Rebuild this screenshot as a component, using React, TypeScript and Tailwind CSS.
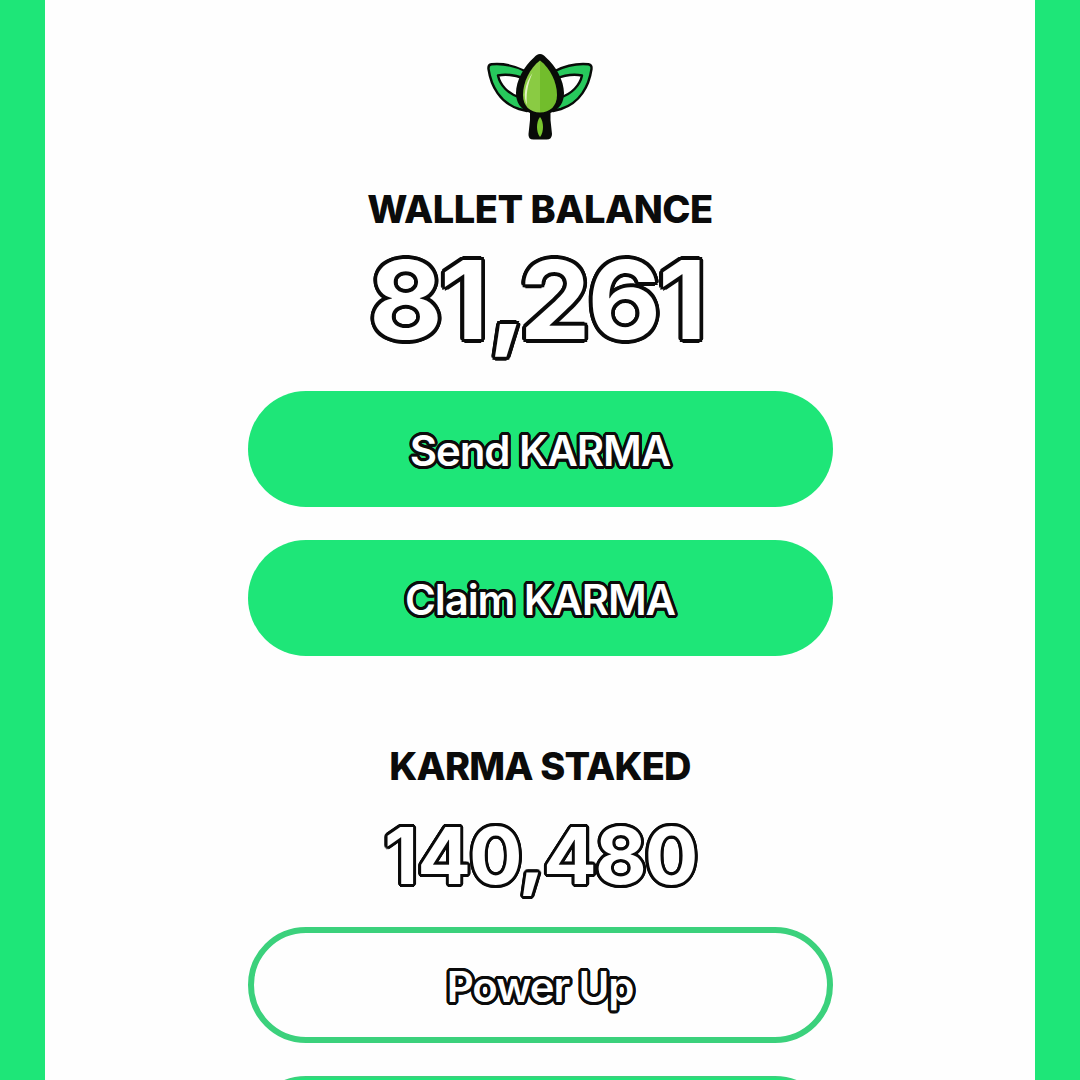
import React from "react";

const THICK =
  "text-white [text-shadow:3.7px_0_#0b0b0b,3.42px_1.42px_#0b0b0b,2.62px_2.62px_#0b0b0b,1.42px_3.42px_#0b0b0b,0_3.7px_#0b0b0b,-1.42px_3.42px_#0b0b0b,-2.62px_2.62px_#0b0b0b,-3.42px_1.42px_#0b0b0b,-3.7px_0_#0b0b0b,-3.42px_-1.42px_#0b0b0b,-2.62px_-2.62px_#0b0b0b,-1.42px_-3.42px_#0b0b0b,0_-3.7px_#0b0b0b,1.42px_-3.42px_#0b0b0b,2.62px_-2.62px_#0b0b0b,3.42px_-1.42px_#0b0b0b]";
const THIN =
  "text-white [text-shadow:3px_0_#0b0b0b,2.77px_1.15px_#0b0b0b,2.12px_2.12px_#0b0b0b,1.15px_2.77px_#0b0b0b,0_3px_#0b0b0b,-1.15px_2.77px_#0b0b0b,-2.12px_2.12px_#0b0b0b,-2.77px_1.15px_#0b0b0b,-3px_0_#0b0b0b,-2.77px_-1.15px_#0b0b0b,-2.12px_-2.12px_#0b0b0b,-1.15px_-2.77px_#0b0b0b,0_-3px_#0b0b0b,1.15px_-2.77px_#0b0b0b,2.12px_-2.12px_#0b0b0b,2.77px_-1.15px_#0b0b0b]";

function Logo() {
  return (
    <svg className="h-[88px] w-[110px] shrink-0" viewBox="485 53 110 88" fill="none" strokeLinejoin="round">
      <g fill="#27c95c" stroke="#080b08" strokeWidth="2.4" fillRule="evenodd">
        <path d="M525 71C513 65 500 63.500 491.500 64.300Q488 65 488.500 69C491 86 500 103 519 109L527 111ZM525 79C514 74.500 505 74 498 75.500C500 85 508 94 520 97.500Z" />
        <path d="M555 71C567 65 580 63.500 588.500 64.300Q592 65 591.500 69C589 86 580 103 561 109L553 111ZM555 79C566 74.500 575 74 582 75.500C580 85 572 94 560 97.500Z" />
      </g>
      <path d="M540 54C542.500 54 544 55.500 546 57.500C556 66 564 81 564 93C564 102 560 109 550.500 113V120L552 134Q552 139.500 546.500 139.500H533.500Q528 139.500 528.500 134L530 120V113C520 109 516 102 516 93C516 81 524 66 534 57.500C536 55.500 537.500 54 540 54Z" fill="#080b08" />
      <path d="M540 60.500C530 68 523 82 523 95C523 106 530 112.500 540 112.500Z" fill="#8acb43" />
      <path d="M540 60.500C550 68 557 82 557 95C557 106 550 112.500 540 112.500Z" fill="#72bd2c" />
      <path d="M532.500 73C524.500 84 523 97 527 105C526 96 527 85 532.500 73Z" fill="#e4f3c5" />
      <path d="M540 117C536 122 536 132 540 137C544 132 544 122 540 117Z" fill="#79c62e" />
    </svg>
  );
}

const TITLE = "h-[46px] whitespace-nowrap text-[38px] leading-[46px] font-extrabold text-[#0b0b0b]";
const LABEL = "whitespace-nowrap pt-[3px] text-[42px] leading-[50px] font-semibold tracking-[-1.1px]";

export default function App() {
  return (
    <div className="flex h-[1080px] w-[1080px] flex-col items-center overflow-hidden border-x-[45px] border-[#1ee678] bg-[#fefefe] pt-[53px] font-['Inter',sans-serif]">
      <Logo />
      <h2 className={`mt-[45px] tracking-[-0.5px] ${TITLE}`}>WALLET BALANCE</h2>
      <p className={`mt-[8px] mr-[7px] h-[120px] scale-x-105 text-[108px] leading-[120px] font-bold tracking-[-3px] ${THICK}`}>
        8<span className="tracking-normal">1</span>
        <span className="relative top-[-3px] tracking-[-7px]">,</span>261
      </p>
      <button className="mt-[31px] flex h-[116px] w-[585px] shrink-0 items-center justify-center rounded-full bg-[#1ee678]">
        <span className={`${LABEL} ${THIN}`}>Send KARMA</span>
      </button>
      <button className="mt-[33px] flex h-[116px] w-[585px] shrink-0 items-center justify-center rounded-full bg-[#1ee678]">
        <span className={`${LABEL} ${THIN}`}>Claim KARMA</span>
      </button>
      <h2 className={`mt-[87px] tracking-[-0.8px] ${TITLE}`}>KARMA STAKED</h2>
      <p className={`mt-[22px] h-[90px] scale-x-102 text-[78px] leading-[90px] font-bold tracking-[-2px] ${THIN}`}>
        <span className="tracking-[-1px]">1</span>4<span className="tracking-[-4px]">0</span>
        <span className="relative top-[-3px]">,</span>480
      </p>
      <button className="mt-[26px] flex h-[116px] w-[585px] shrink-0 items-center justify-center rounded-full border-[6px] border-[#3bd17c]">
        <span className={`${LABEL} ${THIN}`}>Power Up</span>
      </button>
      <button className="mt-[33px] h-[116px] w-[585px] shrink-0 rounded-full border-2 border-[#3bd17c] bg-[#1ee678]" aria-label="Power Down" />
    </div>
  );
}
